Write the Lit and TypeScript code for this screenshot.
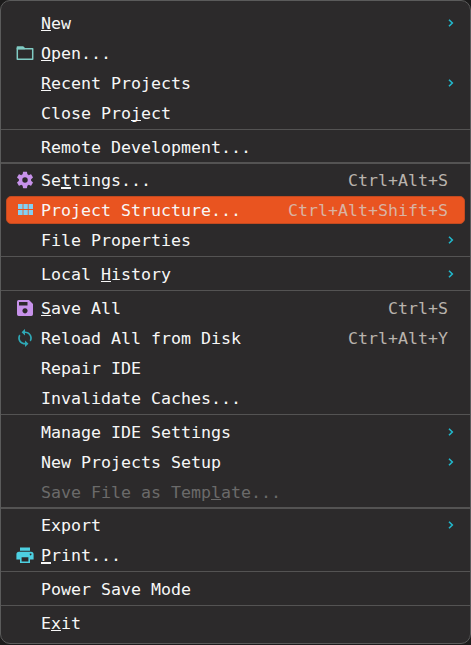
import { LitElement, html, css, svg, nothing } from "lit";
import { customElement, property } from "lit/decorators.js";

interface Item {
  label: string;
  key?: number;
  thickKey?: boolean;
  icon?: string;
  shortcut?: string;
  submenu?: boolean;
  selected?: boolean;
  disabled?: boolean;
}
type Entry = Item | "line" | "thick";

const entries: Entry[] = [
  { label: "New", key: 0, submenu: true },
  { label: "Open...", key: 0, icon: "folder" },
  { label: "Recent Projects", key: 0, submenu: true },
  { label: "Close Project", key: 9 },
  "line",
  { label: "Remote Development..." },
  "thick",
  { label: "Settings...", key: 2, thickKey: true, icon: "gear", shortcut: "Ctrl+Alt+S" },
  { label: "Project Structure...", icon: "grid", shortcut: "Ctrl+Alt+Shift+S", selected: true },
  { label: "File Properties", submenu: true },
  "line",
  { label: "Local History", key: 6, submenu: true },
  "line",
  { label: "Save All", key: 0, icon: "save", shortcut: "Ctrl+S" },
  { label: "Reload All from Disk", icon: "reload", shortcut: "Ctrl+Alt+Y" },
  { label: "Repair IDE" },
  { label: "Invalidate Caches..." },
  "line",
  { label: "Manage IDE Settings", submenu: true },
  { label: "New Projects Setup", submenu: true },
  { label: "Save File as Template...", key: 17, disabled: true },
  "thick",
  { label: "Export", submenu: true },
  { label: "Print...", key: 0, thickKey: true, icon: "print" },
  "line",
  { label: "Power Save Mode" },
  "line",
  { label: "Exit", key: 1 },
];

const icons: Record<string, unknown> = {
  folder: svg`<path fill="none" stroke="#80cbc4" stroke-width="1.5" stroke-linejoin="round" d="M1.300 4.800h15.400v10.400H1.300z"/><path fill="#80cbc4" d="M1.500 2.200h5.700l1.800 1.700v1.300H.6V3.200q0-1 .9-1z"/>`,
  gear: svg`<path transform="translate(-1.2 -1.2) scale(.85)" fill="#c792ea" d="M19.14 12.94c.04-.3.06-.61.06-.94 0-.32-.02-.64-.07-.94l2.03-1.58c.18-.14.23-.41.12-.61l-1.92-3.32c-.12-.22-.37-.29-.59-.22l-2.39.96c-.5-.38-1.03-.7-1.62-.94l-.36-2.54c-.04-.24-.24-.41-.48-.41h-3.84c-.24 0-.43.17-.47.41l-.36 2.54c-.59.24-1.13.57-1.62.94l-2.39-.96c-.22-.08-.47 0-.59.22L2.74 8.87c-.12.21-.08.47.12.61l2.03 1.58c-.05.3-.09.63-.09.94s.02.64.07.94l-2.03 1.58c-.18.14-.23.41-.12.61l1.92 3.32c.12.22.37.29.59.22l2.39-.96c.5.38 1.03.7 1.62.94l.36 2.54c.05.24.24.41.48.41h3.84c.24 0 .44-.17.47-.41l.36-2.54c.59-.24 1.13-.56 1.62-.94l2.39.96c.22.08.47 0 .59-.22l1.92-3.32c.12-.22.07-.47-.12-.61l-2.01-1.58zM12 15.2A3.2 3.2 0 1 1 12 8.800a3.2 3.2 0 0 1 0 6.400z"/>`,
  grid: svg`<path fill="#82d0f5" d="M2 3h4.600v5H2zM7.400 3h4.400v5H7.400zM12.600 3H17v5h-4.400zM2 9h4.600v5H2zM7.400 9h4.400v5H7.400zM12.600 9H17v5h-4.400z"/>`,
  save: svg`<path fill="#c792ea" fill-rule="evenodd" d="M2.700 1H13l4 4v10.300q0 1.700-1.700 1.700H2.700Q1 17 1 15.300V2.700Q1 1 2.700 1zM3 3v3.500h8.500V3zM9 9.200a2.600 2.600 0 1 0 .01 0z"/>`,
  reload: svg`<path transform="translate(-1.300 -.9) scale(.86 .82)" fill="#2fa8b5" d="M12 4V1L8 5l4 4V6c3.310 0 6 2.690 6 6 0 1.010-.25 1.970-.7 2.800l1.460 1.460C19.540 15.030 20 13.570 20 12c0-4.420-3.580-8-8-8zm0 14c-3.310 0-6-2.690-6-6 0-1.010.25-1.970.7-2.800L5.240 7.740C4.460 8.970 4 10.430 4 12c0 4.420 3.580 8 8 8v3l4-4-4-4v3z"/>`,
  print: svg`<path fill="#4dd0e1" fill-rule="evenodd" d="M4 1.500h10v3.300H4zM3 5.800h12q2.600 0 2.600 2.600v5.100H14v3.500H4v-3.500H.4V8.400Q.4 5.800 3 5.800zM5.600 11.300v4.100h6.800v-4.100zM14.600 7.500a.9.900 0 1 0 .01 0z"/>`,
};

@customElement("menu-row")
class MenuRow extends LitElement {
  @property({ attribute: false }) item!: Item;

  static styles = css`
    :host { display: block; box-sizing: border-box; height: 30px; padding-top: 1px; }
    .row {
      box-sizing: border-box;
      height: 28px;
      margin: 0 5px;
      display: flex;
      align-items: center;
      padding: 0 10px 0 9px;
      border: 1px solid transparent;
      border-radius: 5px;
      color: #f7f7f7;
      white-space: pre;
    }
    .selected { background: #e95420; border-color: #c34a20; }
    .disabled { color: #6b6a6a; }
    .icon { width: 18px; height: 18px; flex: none; margin-right: 7px; }
    .icon svg { display: block; }
    .label { flex: 1; padding-top: 2px; }
    .key {
      text-decoration: underline;
      text-decoration-thickness: 1px;
      text-underline-offset: 1px;
      text-decoration-skip-ink: none;
    }
    .thick { text-decoration-thickness: 2px; }
    .shortcut { color: #b9b3ad; margin-right: 6px; padding-top: 2px; }
    .selected .shortcut { color: #d9b3a3; }
    .arrow { width: 6px; height: 8px; display: block; }
  `;

  render() {
    const i = this.item;
    const k = i.key;
    const text =
      k === undefined
        ? i.label
        : html`${i.label.slice(0, k)}<span class="key ${i.thickKey ? "thick" : ""}">${i.label[k]}</span>${i.label.slice(k + 1)}`;
    return html`<div class="row ${i.selected ? "selected" : ""} ${i.disabled ? "disabled" : ""}">
      <span class="icon">${i.icon ? html`<svg width="18" height="18" viewBox="0 0 18 18">${icons[i.icon]}</svg>` : nothing}</span>
      <span class="label">${text}</span>
      ${i.shortcut ? html`<span class="shortcut">${i.shortcut}</span>` : nothing}
      ${i.submenu
        ? html`<svg class="arrow" viewBox="0 0 6 8"><path d="M1 .8L4.300 4 1 7.200" fill="none" stroke="#22b8cc" stroke-width="1.600"/></svg>`
        : nothing}
    </div>`;
  }
}

@customElement("app-root")
class AppRoot extends LitElement {
  static styles = css`
    :host { display: block; height: 645px; background: #1c1b1b; }
    .menu {
      box-sizing: border-box;
      height: 644px;
      padding-top: 7px;
      background: #2c2a2b;
      border: 1px solid #5b5b5b;
      border-radius: 10px;
      font: 16.61px/24px "DejaVu Sans Mono", monospace;
    }
    .line { height: 1px; margin: 1px 0 2px; background: #545353; }
    .thick { height: 2px; margin-bottom: 1px; background: #545353; }
  `;

  render() {
    return html`<div class="menu">
      ${entries.map((e) => (typeof e === "string" ? html`<div class=${e}></div>` : html`<menu-row .item=${e}></menu-row>`))}
    </div>`;
  }
}
